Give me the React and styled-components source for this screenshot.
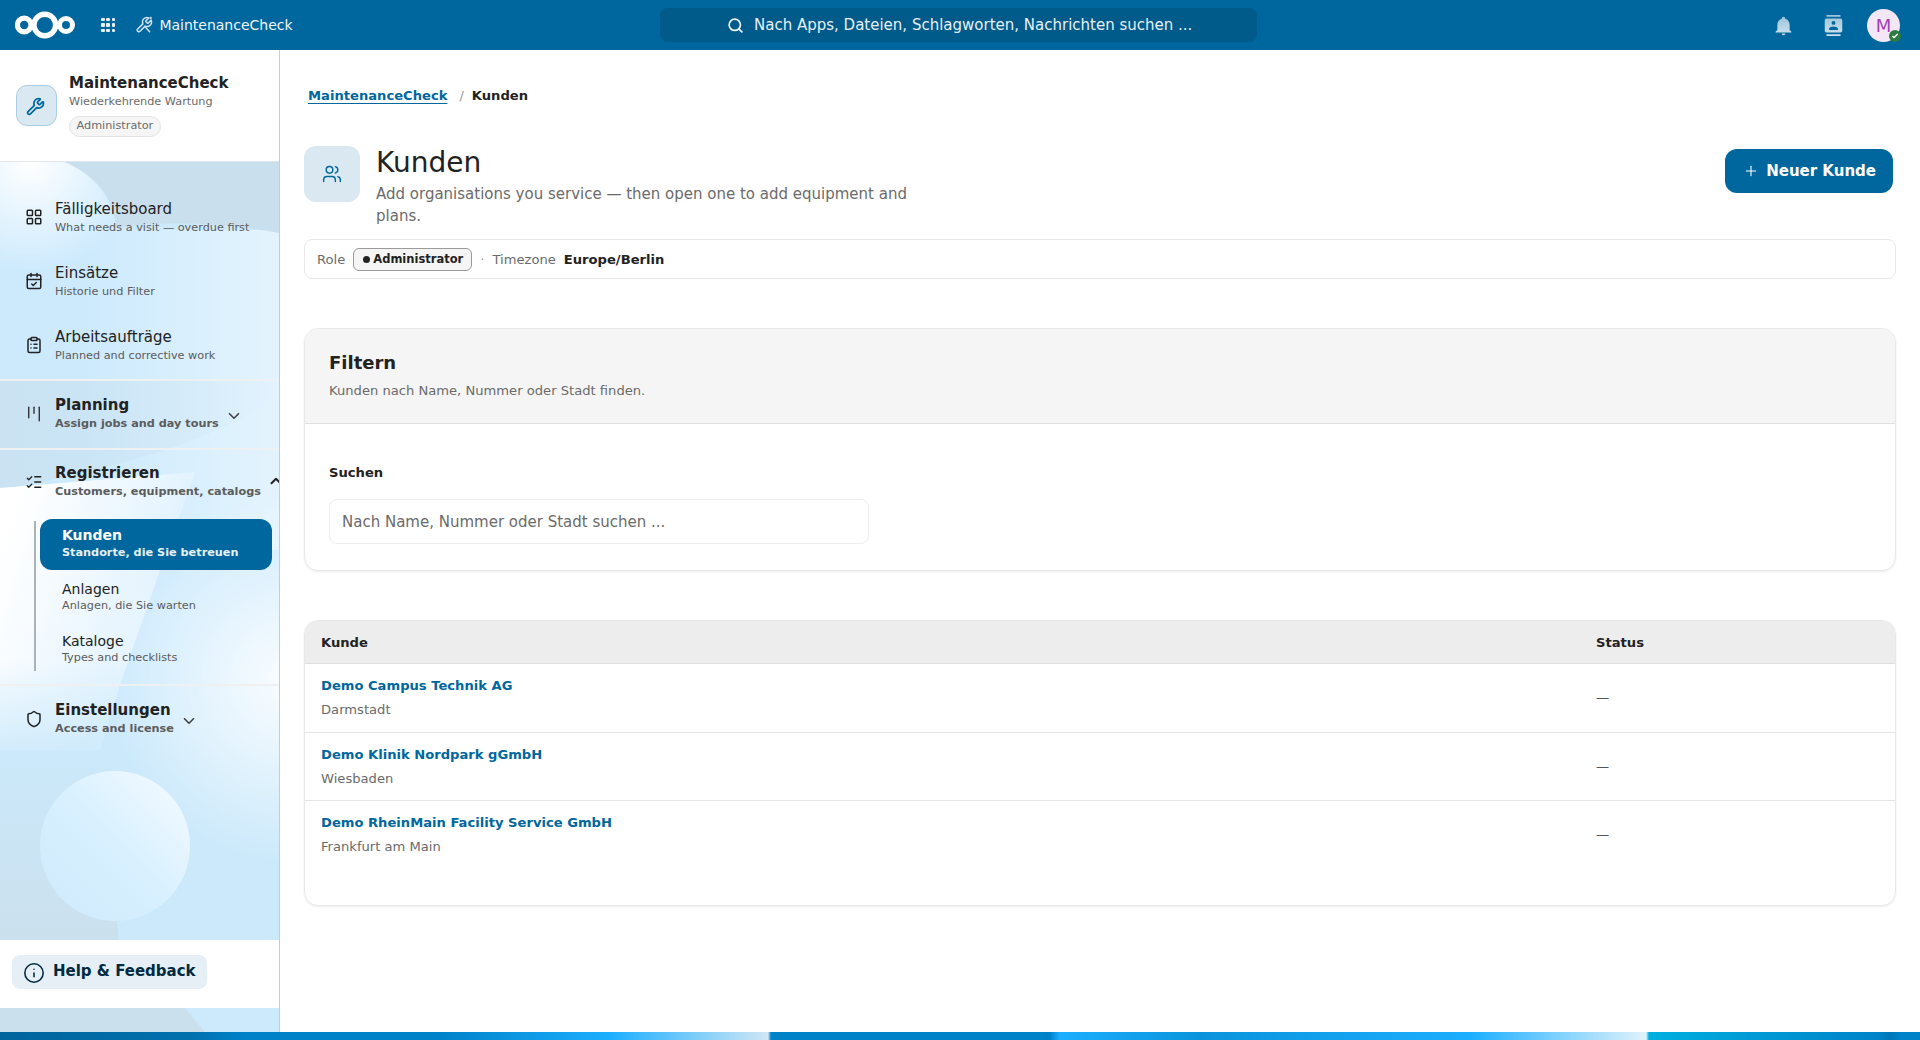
import React from "react";
import styled, { createGlobalStyle } from "styled-components";
import {
  CalendarCheck,
  ChevronDown,
  ChevronUp,
  ClipboardList,
  Info,
  Kanban,
  LayoutGrid,
  ListChecks,
  Plus,
  Search,
  Shield,
  Users,
  Wrench,
} from "lucide-react";

const GlobalStyle = createGlobalStyle`
  html, body {
    margin: 0;
    height: 100%;
    background: #fff;
    color: #222;
    font-family: "DejaVu Sans", sans-serif;
  }
  * { box-sizing: border-box; }
`;

const Page = styled.div`
  height: 1040px;
  display: flex;
  flex-direction: column;
  overflow: hidden;
`;

/* top bar */
const TopBar = styled.header`
  height: 50px;
  flex: none;
  background: #00679e;
  display: grid;
  grid-template-columns: 660px 597px 1fr;
  align-items: center;
  color: #fff;
`;

const TopLeft = styled.div`
  display: flex;
  align-items: center;
  padding-left: 15px;
`;

const AppsButton = styled.div`
  display: grid;
  grid-template-columns: repeat(3, 3.6px);
  gap: 1.8px;
  margin-left: 25px;
  span {
    height: 3.6px;
    border-radius: 1px;
    background: #e6f0f5;
  }
`;

const AppName = styled.div`
  display: flex;
  align-items: center;
  gap: 6px;
  margin-left: 20px;
  font-size: 14px;
  color: #f0f6fa;
`;

const SearchBox = styled.div`
  height: 34px;
  border-radius: 8px;
  background: #005a8a;
  display: flex;
  align-items: center;
  gap: 10px;
  padding-left: 67px;
  font-size: 15px;
  color: #e6f0f5;
`;

const TopRight = styled.div`
  display: flex;
  align-items: center;
  justify-content: flex-end;
  padding-right: 20px;
`;

const TopIcon = styled.svg`
  width: 21px;
  height: 21px;
  margin-right: 29px;
  &:last-of-type {
    margin-right: 23px;
  }
`;

const Avatar = styled.div`
  position: relative;
  width: 33px;
  height: 33px;
  border-radius: 50%;
  background: #f3e7f6;
  color: #a43fb5;
  font-size: 18px;
  display: flex;
  align-items: center;
  justify-content: center;
`;

const StatusDot = styled.span`
  position: absolute;
  right: -1px;
  bottom: 0;
  width: 12px;
  height: 12px;
  border-radius: 50%;
  background: #2d7b41;
  display: flex;
  align-items: center;
  justify-content: center;
`;

const Body = styled.div`
  flex: 1;
  min-height: 0;
  display: flex;
`;

/* sidebar */
const Sidebar = styled.aside`
  position: relative;
  width: 280px;
  flex: none;
  border-right: 1px solid #b5d2e4;
  overflow: hidden;
  display: flex;
  flex-direction: column;
  background: #cdeafd;
`;

const Wallpaper = styled.svg`
  position: absolute;
  inset: 0;
  width: 279px;
  height: 982px;
`;

const SideHead = styled.div`
  position: relative;
  height: 112px;
  flex: none;
  background: #fff;
  border-bottom: 1px solid #e3e6e8;
  display: flex;
  align-items: center;
  gap: 12px;
  padding: 0 16px 2px;
`;

const AppTile = styled.div`
  width: 41px;
  height: 41px;
  flex: none;
  margin-top: 2px;
  padding: 2px 3px 0 0;
  border-radius: 11px;
  background: #d9e8f1;
  border: 1px solid #a9cde2;
  color: #00679e;
  display: flex;
  align-items: center;
  justify-content: center;
`;

const SideTitle = styled.div`
  font-size: 15px;
  line-height: 20px;
  font-weight: 700;
`;

const SideSub = styled.div`
  margin-top: 1px;
  font-size: 11.25px;
  line-height: 16px;
  color: #6b6b6b;
`;

const RoleChip = styled.span`
  display: inline-block;
  margin-top: 6px;
  padding: 0 6.5px;
  height: 21px;
  line-height: 18px;
  font-size: 11.25px;
  color: #6b6b6b;
  background: #f5f5f5;
  border: 1px solid #e3e3e3;
  border-radius: 11px;
`;

const Nav = styled.nav`
  position: relative;
  flex: 1;
  min-height: 0;
  padding-top: 23px;
`;

const NavItem = styled.a`
  height: 64px;
  display: flex;
  align-items: center;
  gap: 12px;
  padding-left: 25px;
  svg {
    flex: none;
  }
`;

const NavSection = styled.div`
  border-top: 2px solid #eef0f1;
  &:first-of-type {
    margin-top: 2px;
  }
`;

const SectionHead = styled.div`
  height: ${(p) => p.$height || 66}px;
  display: flex;
  align-items: center;
  gap: 12px;
  padding: 0 0 2px 25px;
  white-space: nowrap;
  color: #222;
  svg {
    flex: none;
  }
`;

const ItemText = styled.div`
  white-space: nowrap;
`;

const ItemTitle = styled.div`
  font-size: 15px;
  line-height: 20px;
  font-weight: ${(p) => (p.$bold ? 700 : 400)};
  color: #222;
`;

const ItemSub = styled.div`
  margin-top: 1px;
  font-size: 11.25px;
  line-height: 16px;
  font-weight: ${(p) => (p.$bold ? 700 : 400)};
  color: #5c5c5c;
`;

const Chevron = styled.span`
  display: flex;
  margin-left: -6px;
  margin-top: ${(p) => (p.$open ? -1 : 4)}px;
  color: #444;
`;

const SubList = styled.div`
  position: relative;
  padding: 4px 7px 9px 40px;
  &::before {
    content: "";
    position: absolute;
    left: 34px;
    top: 6px;
    bottom: 13px;
    width: 2px;
    background: #abb3b8;
  }
`;

const SubItem = styled.a`
  display: block;
  height: ${(p) => (p.$active ? 51 : 52)}px;
  padding: ${(p) => (p.$active ? 7 : 9)}px 0 0 22px;
  border-radius: 12px;
  margin-bottom: ${(p) => (p.$active ? 1 : 0)}px;
  background: ${(p) => (p.$active ? "#00679e" : "transparent")};
`;

const SubTitle = styled.div`
  font-size: 14px;
  line-height: 18px;
  font-weight: ${(p) => (p.$active ? 700 : 400)};
  color: ${(p) => (p.$active ? "#fff" : "#222")};
`;

const SubText = styled.div`
  font-size: 11.25px;
  line-height: 16px;
  margin-top: ${(p) => (p.$active ? 1 : 0)}px;
  font-weight: ${(p) => (p.$active ? 700 : 400)};
  color: ${(p) => (p.$active ? "#e6f0f5" : "#5c5c5c")};
`;

const HelpArea = styled.div`
  position: relative;
  height: 68px;
  flex: none;
  background: #fff;
  padding: 15px 12px;
  margin-bottom: 24px;
`;

const HelpButton = styled.a`
  width: 195px;
  height: 34px;
  border-radius: 8px;
  background: #e5eff5;
  color: #002a41;
  font-size: 15px;
  font-weight: 700;
  display: flex;
  align-items: center;
  gap: 8px;
  padding: 0 0 3px 11px;
  svg {
    flex: none;
    margin-top: 5px;
  }
`;

/* content */
const Main = styled.main`
  flex: 1;
  min-width: 0;
  padding: 34px 24px 0;
`;

const Crumbs = styled.div`
  height: 22px;
  display: flex;
  align-items: center;
  padding-left: 4px;
  font-size: 13.125px;
  font-weight: 700;
`;

const CrumbLink = styled.a`
  color: #00679e;
  text-decoration: underline;
  text-underline-offset: 3px;
`;

const CrumbSep = styled.span`
  margin: 0 8px 0 12px;
  color: #999;
  font-weight: 400;
`;

const PageHead = styled.div`
  display: flex;
  align-items: flex-start;
  gap: 16px;
  margin-top: 40px;
`;

const PageTile = styled.div`
  width: 56px;
  height: 56px;
  flex: none;
  border-radius: 12px;
  background: #d9e8f1;
  color: #00679e;
  display: flex;
  align-items: center;
  justify-content: center;
`;

const PageText = styled.div`
  flex: 1;
  min-width: 0;
`;

const PageTitle = styled.h1`
  margin: 0 0 3px;
  font-size: 28px;
  line-height: 34px;
  font-weight: 400;
  color: #222;
`;

const PageSub = styled.p`
  margin: 0;
  max-width: 560px;
  font-size: 15px;
  line-height: 22px;
  color: #6b6b6b;
`;

const PrimaryButton = styled.button`
  height: 44px;
  margin: 3px 3px 0 0;
  padding: 0 17px 0 18.5px;
  border: 0;
  border-radius: 12px;
  background: #00679e;
  color: #fff;
  font: 700 15px "DejaVu Sans", sans-serif;
  display: flex;
  align-items: center;
  gap: 7px;
`;

const MetaBar = styled.div`
  height: 40px;
  margin-top: 12px;
  border: 1px solid #e8e8e8;
  border-radius: 8px;
  display: flex;
  align-items: center;
  padding-left: 12px;
  font-size: 13.125px;
  color: #6b6b6b;
`;

const MetaBadge = styled.span`
  height: 23px;
  margin-left: 8px;
  padding: 0 8px 0 9px;
  border: 1px solid #9a9a9a;
  border-radius: 6px;
  background: #f5f5f5;
  color: #222;
  font-size: 11.5px;
  font-weight: 700;
  display: flex;
  align-items: center;
  gap: 3px;
  &::before {
    content: "";
    width: 7px;
    height: 7px;
    border-radius: 50%;
    background: #222;
  }
`;

const MetaDot = styled.span`
  margin: 0 8px;
  color: #999;
`;

const MetaValue = styled.strong`
  margin-left: 8px;
  color: #222;
`;

const Card = styled.section`
  margin-top: 49px;
  border: 1px solid #e8e8e8;
  border-radius: 14px;
  box-shadow: 0 1px 2px rgba(0, 0, 0, 0.08);
  overflow: hidden;
`;

const CardHead = styled.div`
  height: 95px;
  padding: 22px 24px 0;
  background: #f5f5f5;
  border-bottom: 1px solid #e0e0e0;
`;

const CardTitle = styled.h2`
  margin: 0;
  font-size: 18px;
  line-height: 24px;
  font-weight: 700;
  color: #222;
`;

const CardSub = styled.p`
  margin: 6px 0 0;
  font-size: 13.125px;
  line-height: 20px;
  color: #6b6b6b;
`;

const CardBody = styled.div`
  height: 146px;
  padding: 39px 24px 0;
`;

const FieldLabel = styled.label`
  display: block;
  font-size: 13.125px;
  line-height: 20px;
  font-weight: 700;
  color: #222;
`;

const SearchField = styled.input`
  display: block;
  width: 540px;
  height: 45px;
  margin-top: 16px;
  padding: 0 12px;
  border: 1px solid #ededed;
  border-radius: 8px;
  font: 15px "DejaVu Sans", sans-serif;
  &::placeholder {
    color: #6b6b6b;
    opacity: 1;
  }
`;

const TableRow = styled.div`
  display: grid;
  grid-template-columns: 1fr 299px;
  align-items: center;
  padding-left: 16px;
  height: ${(p) => p.$height}px;
  border-bottom: 1px solid #e6e6e6;
  &:last-child {
    border-bottom: 0;
    padding-bottom: 36px;
  }
`;

const TableHead = styled(TableRow)`
  background: #ededed;
  border-bottom-color: #e0e0e0;
  font-size: 13.125px;
  font-weight: 700;
  color: #222;
`;

const CustomerName = styled.a`
  display: block;
  font-size: 13.125px;
  line-height: 20px;
  font-weight: 700;
  color: #00679e;
`;

const CustomerCity = styled.div`
  margin-top: 4px;
  font-size: 13.125px;
  line-height: 20px;
  color: #6b6b6b;
`;

const StatusCell = styled.div`
  padding-bottom: 1px;
  font-size: 13.125px;
  color: #555;
`;

/* wallpaper strip under the page */
const BottomStrip = styled.div`
  height: 8px;
  flex: none;
  background: linear-gradient(
    90deg,
    #00649c 0,
    #0070ad 190px,
    #0082c9 245px,
    #0082c9 440px,
    #1cafff 610px,
    #cfe6f5 768px,
    #0082c9 771px,
    #0082c9 1050px,
    #1cafff 1060px,
    #0a93dc 1200px,
    #1cafff 1470px,
    #e0f2fb 1646px,
    #00afe0 1649px,
    #0082c9 1880px,
    #0076b8 1890px,
    #0082c9 1900px
  );
`;

const customers = [
  { name: "Demo Campus Technik AG", city: "Darmstadt", height: 69 },
  { name: "Demo Klinik Nordpark gGmbH", city: "Wiesbaden", height: 68 },
  { name: "Demo RheinMain Facility Service GmbH", city: "Frankfurt am Main", height: 104 },
];

const SidebarWallpaper = () => (
  <Wallpaper viewBox="0 0 279 982" aria-hidden="true">
    <defs>
      <radialGradient id="blob" gradientUnits="userSpaceOnUse" cx="30" cy="112" r="110">
        <stop offset="0" stopColor="#fff" />
        <stop offset="1" stopColor="#fff" stopOpacity="0" />
      </radialGradient>
      <linearGradient id="rightGlow" x1="0" y1="0" x2="1" y2="0">
        <stop offset="0.3" stopColor="#fff" stopOpacity="0" />
        <stop offset="1" stopColor="#fff" stopOpacity="0.45" />
      </linearGradient>
      <linearGradient id="band" x1="0" y1="0" x2="1" y2="0">
        <stop offset="0" stopColor="#c9dfed" stopOpacity="0.7" />
        <stop offset="1" stopColor="#c9dfed" stopOpacity="0" />
      </linearGradient>
      <linearGradient id="sheet" gradientUnits="userSpaceOnUse" x1="0" y1="500" x2="190" y2="560">
        <stop offset="0" stopColor="#fff" />
        <stop offset="1" stopColor="#dcf0fe" />
      </linearGradient>
      <linearGradient id="fade" x1="0" y1="0" x2="0" y2="1">
        <stop offset="0" stopColor="#cbe9fb" stopOpacity="0" />
        <stop offset="1" stopColor="#cbe9fb" />
      </linearGradient>
      <radialGradient id="glow2" gradientUnits="userSpaceOnUse" cx="290" cy="630" r="185">
        <stop offset="0" stopColor="#fff" stopOpacity="0.9" />
        <stop offset="1" stopColor="#fff" stopOpacity="0" />
      </radialGradient>
      <linearGradient id="floor" x1="0" y1="0" x2="0" y2="1">
        <stop offset="0" stopColor="#cbe0ed" stopOpacity="0" />
        <stop offset="1" stopColor="#cbe0ed" />
      </linearGradient>
      <linearGradient id="globe" x1="0.1" y1="0.9" x2="0.9" y2="0.1">
        <stop offset="0" stopColor="#d0ebfc" />
        <stop offset="0.5" stopColor="#d8f0ff" />
        <stop offset="1" stopColor="#f0f9ff" />
      </linearGradient>
    </defs>
    <rect width="279" height="982" fill="#cdeafd" />
    <rect y="180" width="279" height="320" fill="url(#rightGlow)" />
    <path d="M0 330H279V345C200 400 100 420 0 440Z" fill="url(#band)" />
    <path d="M60 111H279V183C220 172 165 170 116 178C116 150 96 124 60 111Z" fill="#c9dfed" />
    <path d="M0 111H62C96 124 116 150 116 190C116 240 100 270 60 285L0 290Z" fill="url(#blob)" />
    <path d="M0 438L195 422L160 520L120 635L100 700L0 700Z" fill="url(#sheet)" />
    <rect y="610" width="279" height="110" fill="url(#fade)" />
    <rect y="720" width="279" height="170" fill="#cbe9fb" />
    <rect y="440" width="279" height="450" fill="url(#glow2)" />
    <path d="M0 700H110L118 890H0Z" fill="url(#floor)" />
    <circle cx="115" cy="796" r="75" fill="url(#globe)" />
    <path d="M0 958H185L205 982H0Z" fill="#cbe0ed" />
  </Wallpaper>
);

const HeaderToolIcon = () => (
  <svg width="18" height="18" viewBox="0 0 24 24" fill="none" stroke="#cfe2ee" strokeWidth="2" strokeLinecap="round" strokeLinejoin="round">
    <path d="M14.7 6.3a1 1 0 0 0 0 1.4l1.6 1.6a1 1 0 0 0 1.4 0l3.77-3.77a6 6 0 0 1-7.94 7.94l-6.91 6.91a2.12 2.12 0 0 1-3-3l6.91-6.91a6 6 0 0 1 7.94-7.94l-3.76 3.76z" />
    <path d="M14 15l5.5 6" />
    <circle cx="21" cy="2.5" r="1.4" fill="#cfe2ee" stroke="none" />
  </svg>
);

const App = () => (
  <Page>
    <GlobalStyle />
    <TopBar>
      <TopLeft>
        <svg width="61" height="28" viewBox="15 11.5 61 28" fill="none" stroke="#fff">
          <circle cx="24.2" cy="25.5" r="6.8" strokeWidth="5.2" />
          <circle cx="44.8" cy="25.5" r="10.8" strokeWidth="5.4" />
          <circle cx="66" cy="25.5" r="6.5" strokeWidth="5" />
        </svg>
        <AppsButton>
          {Array.from({ length: 9 }).map((_, i) => (
            <span key={i} />
          ))}
        </AppsButton>
        <AppName>
          <HeaderToolIcon />
          MaintenanceCheck
        </AppName>
      </TopLeft>
      <SearchBox>
        <Search size={17} strokeWidth={2.4} color="#f0f6fa" />
        Nach Apps, Dateien, Schlagworten, Nachrichten suchen ...
      </SearchBox>
      <TopRight>
        <TopIcon viewBox="0 0 24 24">
          <defs>
            <linearGradient id="bellFill" x1="0" y1="0" x2="0" y2="1">
              <stop offset="0" stopColor="#9cc3da" />
              <stop offset="1" stopColor="#cfe2ee" />
            </linearGradient>
          </defs>
          <path fill="url(#bellFill)" d="M21 19v1H3v-1l2-2v-6c0-3.1 2-5.8 5-6.7V4a2 2 0 0 1 4 0v.3c3 .9 5 3.6 5 6.7v6l2 2M14 21a2 2 0 0 1-4 0" />
        </TopIcon>
        <TopIcon viewBox="0 0 24 24">
          <defs>
            <linearGradient id="contactFill" x1="0" y1="0" x2="0" y2="1">
              <stop offset="0" stopColor="#9cc3da" />
              <stop offset="1" stopColor="#cfe2ee" />
            </linearGradient>
          </defs>
          <path fill="url(#contactFill)" fillRule="evenodd" d="M20 0H4v2h16V0M4 24h16v-2H4v2M20 4H4a2 2 0 0 0-2 2v12c0 1.1.9 2 2 2h16a2 2 0 0 0 2-2V6a2 2 0 0 0-2-2m-8 2.75A2.25 2.25 0 1 1 12 11.25 2.25 2.25 0 0 1 12 6.75M17 17H7v-1.5c0-1.67 3.33-2.5 5-2.5s5 .83 5 2.5V17Z" />
        </TopIcon>
        <Avatar>
          M
          <StatusDot>
            <svg width="8" height="8" viewBox="0 0 24 24" fill="none" stroke="#fff" strokeWidth="4" strokeLinecap="round" strokeLinejoin="round">
              <path d="M5 13l4 4 10-10" />
            </svg>
          </StatusDot>
        </Avatar>
      </TopRight>
    </TopBar>

    <Body>
      <Sidebar>
        <SidebarWallpaper />
        <SideHead>
          <AppTile>
            <Wrench size={19} strokeWidth={2.2} />
          </AppTile>
          <div>
            <SideTitle>MaintenanceCheck</SideTitle>
            <SideSub>Wiederkehrende Wartung</SideSub>
            <RoleChip>Administrator</RoleChip>
          </div>
        </SideHead>

        <Nav>
          <NavItem>
            <LayoutGrid size={18} strokeWidth={2} />
            <ItemText>
              <ItemTitle>Fälligkeitsboard</ItemTitle>
              <ItemSub>What needs a visit — overdue first</ItemSub>
            </ItemText>
          </NavItem>
          <NavItem>
            <CalendarCheck size={18} strokeWidth={2} />
            <ItemText>
              <ItemTitle>Einsätze</ItemTitle>
              <ItemSub>Historie und Filter</ItemSub>
            </ItemText>
          </NavItem>
          <NavItem>
            <ClipboardList size={18} strokeWidth={2} />
            <ItemText>
              <ItemTitle>Arbeitsaufträge</ItemTitle>
              <ItemSub>Planned and corrective work</ItemSub>
            </ItemText>
          </NavItem>

          <NavSection>
            <SectionHead $height={67}>
              <Kanban size={18} strokeWidth={1.7} />
              <ItemText>
                <ItemTitle $bold>Planning</ItemTitle>
                <ItemSub $bold>Assign jobs and day tours</ItemSub>
              </ItemText>
              <Chevron>
                <ChevronDown size={18} strokeWidth={2.2} />
              </Chevron>
            </SectionHead>
          </NavSection>

          <NavSection>
            <SectionHead $height={65}>
              <ListChecks size={18} strokeWidth={1.7} />
              <ItemText>
                <ItemTitle $bold>Registrieren</ItemTitle>
                <ItemSub $bold>Customers, equipment, catalogs</ItemSub>
              </ItemText>
              <Chevron $open>
                <ChevronUp size={18} strokeWidth={2.6} color="#222" />
              </Chevron>
            </SectionHead>
            <SubList>
              <SubItem $active>
                <SubTitle $active>Kunden</SubTitle>
                <SubText $active>Standorte, die Sie betreuen</SubText>
              </SubItem>
              <SubItem>
                <SubTitle>Anlagen</SubTitle>
                <SubText>Anlagen, die Sie warten</SubText>
              </SubItem>
              <SubItem>
                <SubTitle>Kataloge</SubTitle>
                <SubText>Types and checklists</SubText>
              </SubItem>
            </SubList>
          </NavSection>

          <NavSection>
            <SectionHead $height={67}>
              <Shield size={18} strokeWidth={2} />
              <ItemText>
                <ItemTitle $bold>Einstellungen</ItemTitle>
                <ItemSub $bold>Access and license</ItemSub>
              </ItemText>
              <Chevron>
                <ChevronDown size={18} strokeWidth={2.2} />
              </Chevron>
            </SectionHead>
          </NavSection>
        </Nav>

        <HelpArea>
          <HelpButton>
            <Info size={22} strokeWidth={1.7} />
            Help &amp; Feedback
          </HelpButton>
        </HelpArea>
      </Sidebar>

      <Main>
        <Crumbs>
          <CrumbLink>MaintenanceCheck</CrumbLink>
          <CrumbSep>/</CrumbSep>
          <span>Kunden</span>
        </Crumbs>

        <PageHead>
          <PageTile>
            <Users size={20} strokeWidth={1.7} />
          </PageTile>
          <PageText>
            <PageTitle>Kunden</PageTitle>
            <PageSub>Add organisations you service — then open one to add equipment and plans.</PageSub>
          </PageText>
          <PrimaryButton>
            <Plus size={16} strokeWidth={1.6} />
            Neuer Kunde
          </PrimaryButton>
        </PageHead>

        <MetaBar>
          Role
          <MetaBadge>Administrator</MetaBadge>
          <MetaDot>·</MetaDot>
          Timezone
          <MetaValue>Europe/Berlin</MetaValue>
        </MetaBar>

        <Card>
          <CardHead>
            <CardTitle>Filtern</CardTitle>
            <CardSub>Kunden nach Name, Nummer oder Stadt finden.</CardSub>
          </CardHead>
          <CardBody>
            <FieldLabel>Suchen</FieldLabel>
            <SearchField placeholder="Nach Name, Nummer oder Stadt suchen ..." />
          </CardBody>
        </Card>

        <Card>
          <TableHead $height={43}>
            <div>Kunde</div>
            <div>Status</div>
          </TableHead>
          {customers.map((c) => (
            <TableRow key={c.name} $height={c.height}>
              <div>
                <CustomerName>{c.name}</CustomerName>
                <CustomerCity>{c.city}</CustomerCity>
              </div>
              <StatusCell>—</StatusCell>
            </TableRow>
          ))}
        </Card>
      </Main>
    </Body>
    <BottomStrip />
  </Page>
);

export default App;
